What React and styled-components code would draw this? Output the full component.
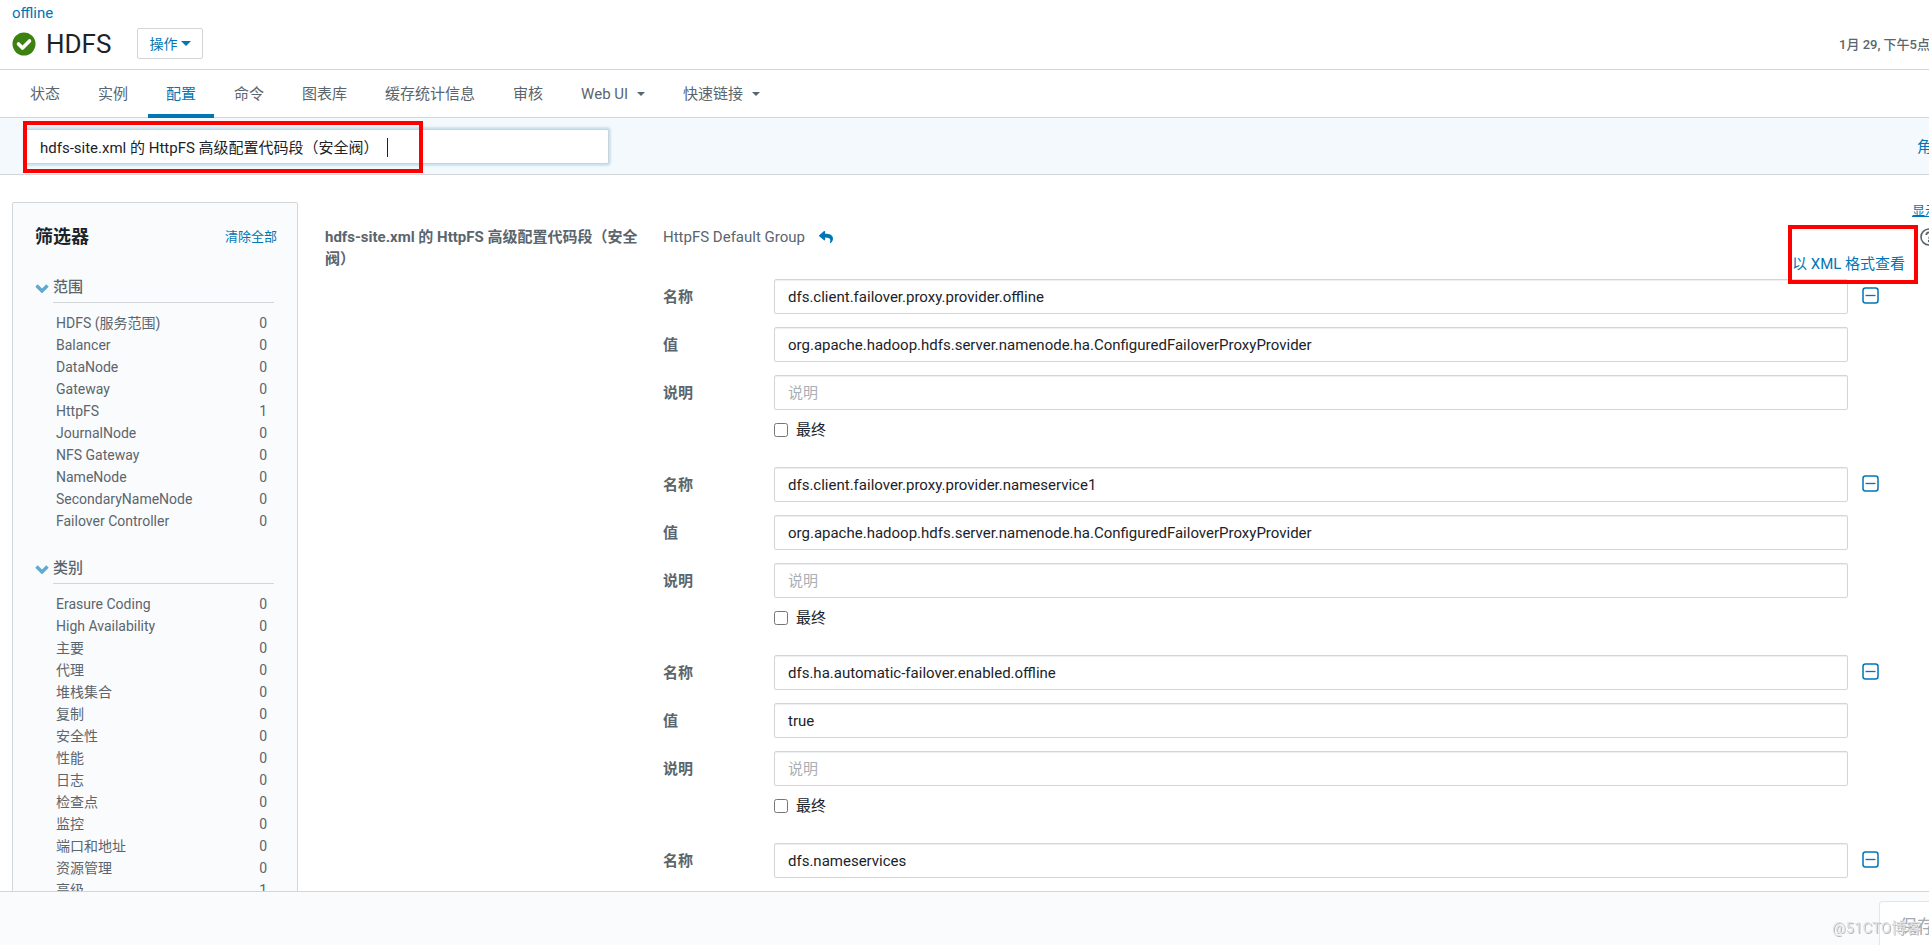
import React, { useState } from "react";
import styled, { createGlobalStyle } from "styled-components";
import { FaReply } from "react-icons/fa";

const GlobalStyle = createGlobalStyle`
  * {
    box-sizing: border-box;
  }

  body {
    margin: 0;
    overflow: hidden;
    background: #fff;
    color: #5a656d;
    font-family: Roboto, "Noto Sans CJK SC", sans-serif;
    font-size: 15px;
    line-height: 22px;
  }

  a {
    color: #0076b5;
    text-decoration: none;
  }

  input,
  button {
    font: inherit;
  }
`;

// the page runs a little past the right side of the window
const Page = styled.div`
  display: flex;
  flex-direction: column;
  height: 100vh;
  margin-right: -26px;
`;

const Header = styled.header`
  display: flex;
  align-items: flex-end;
  justify-content: space-between;
  padding: 2px 25px 10px 12px;
  border-bottom: 1px solid #d3d6d9;
`;

const Cluster = styled.a`
  display: block;
`;

const TitleRow = styled.div`
  display: flex;
  align-items: center;
  margin-top: 4px;

  h1 {
    margin: 0 26px 0 10px;
    color: #1b2329;
    font-size: 26px;
    font-weight: 400;
    line-height: 30px;
  }
`;

const ActionButton = styled.button`
  display: flex;
  align-items: center;
  gap: 4px;
  height: 31px;
  padding: 0 11px;
  border: 1px solid #d3d6d9;
  border-radius: 2px;
  background: #fff;
  color: #0076b5;
  font-size: 14px;
`;

const Caret = styled.span`
  border: ${props => props.$size || 4}px solid transparent;
  border-top-color: currentColor;
  border-bottom: 0;
`;

const Clock = styled.span`
  padding-bottom: 3px;
  font-size: 13px;
  font-weight: 500;
`;

const Tabs = styled.nav`
  display: flex;
  gap: 2px;
  padding: 0 12px;
  border-bottom: 1px solid #d3d6d9;
`;

const Tab = styled.a`
  display: flex;
  align-items: center;
  gap: 9px;
  height: 48px;
  margin-bottom: -1px;
  padding: 4px 18px 0;
  border-bottom: 4px solid ${props => (props.$active ? "#0076b5" : "transparent")};
  color: ${props => (props.$active ? "#0076b5" : "#5a656d")};
`;

const SearchBar = styled.div`
  display: flex;
  align-items: center;
  justify-content: space-between;
  padding: 11px 23px 10px 25px;
  border-bottom: 1px solid #d3d6d9;
  background: #f4f9fd;
`;

const SearchBox = styled.div`
  position: relative;
  width: 584px;
  max-width: 90%;

  input {
    display: block;
    width: 100%;
    height: 35px;
    padding: 0 14px;
    border: 1px solid #c9d3da;
    border-radius: 2px;
    outline: 0;
    background: #fff;
    box-shadow: 0 0 2px 2px #cbe3ef;
    color: #1b2329;
  }
`;

const TextCursor = styled.span`
  position: absolute;
  top: 9px;
  left: 362px;
  width: 1px;
  height: 19px;
  background: #1b2329;
`;

const Mark = styled.span`
  position: absolute;
  top: ${props => props.$top}px;
  left: ${props => props.$left}px;
  width: ${props => props.$width}px;
  height: ${props => props.$height}px;
  border: 4px solid #fe0000;
  pointer-events: none;
`;

const Content = styled.main`
  display: flex;
  flex: 1;
  align-items: flex-start;
  min-height: 0;
  padding: 27px 17px 0 12px;
  overflow: hidden;
`;

const Sidebar = styled.aside`
  flex: none;
  width: 286px;
  padding: 22px 23px 23px 22px;
  border: 1px solid #d3d6d9;
  border-radius: 2px;
  background: #fafbfd;
`;

const SidebarHeader = styled.div`
  display: flex;
  align-items: center;
  justify-content: space-between;
  padding-bottom: 25px;

  h2 {
    margin: 0;
    color: #1b2329;
    font-size: 18px;
    font-weight: 700;
    line-height: 24px;
  }

  a {
    margin-right: -3px;
    font-size: 13px;
  }
`;

const Filter = styled.section`
  margin-bottom: 23px;

  ul {
    margin: 9px 0 0;
    padding: 0 7px 0 21px;
    list-style: none;
  }

  li {
    display: flex;
    justify-content: space-between;
    font-size: 14px;
  }
`;

const FilterTitle = styled.h3`
  display: flex;
  align-items: center;
  gap: 4px;
  margin: 0;
  font-size: 15px;
  font-weight: 500;
  line-height: 26px;

  svg {
    margin-bottom: 2px;
  }

  span {
    flex: 1;
    padding-bottom: 2px;
    border-bottom: 1px solid #d3d6d9;
  }
`;

const Settings = styled.div`
  flex: 1;
  padding-left: 27px;
`;

const ShowAll = styled.a`
  display: block;
  margin: -2px 0 4px;
  font-size: 13px;
  text-align: right;
  text-decoration: underline;
`;

const Property = styled.div`
  display: grid;
  grid-template-columns: 325px 1fr;
  column-gap: 13px;
`;

const PropertyName = styled.div`
  font-weight: 700;
`;

const GroupRow = styled.div`
  display: flex;
  align-items: center;
  gap: 14px;

  a {
    display: flex;
    margin-right: auto;
  }
`;

const HelpButton = styled.button`
  display: flex;
  padding: 0;
  border: 0;
  background: none;
  color: #5a656d;
`;

const XmlRow = styled.div`
  position: relative;
  width: 130px;
  margin: 5px 20px 4px auto;
  padding-left: 4px;
`;

const Entry = styled.div`
  display: grid;
  grid-template-columns: 111px 1fr 90px;
  align-items: center;
  row-gap: 13px;
  margin-bottom: 30px;

  > label {
    font-weight: 700;
  }
`;

const Field = styled.input`
  grid-column: 2;
  width: 100%;
  height: 35px;
  padding: 0 13px;
  border: 1px solid #d3d6d9;
  border-radius: 2px;
  box-shadow: inset 0 1px 1px #eceeef;
  color: #1b2329;

  &::placeholder {
    color: #a9afb4;
  }
`;

const RemoveButton = styled.button`
  display: flex;
  width: 17px;
  margin-left: 14px;
  padding: 0 0 2px;
  border: 0;
  background: none;
  color: #0076b5;
`;

const FinalCheck = styled.div`
  display: flex;
  grid-column: 2;
  align-items: center;
  gap: 8px;
  height: 14px;
  color: #1b2329;

  input {
    width: 14px;
    height: 14px;
    margin: 0;
  }
`;

const Footer = styled.footer`
  display: flex;
  flex: none;
  align-items: flex-start;
  justify-content: flex-end;
  height: 54px;
  padding-top: 9px;
  overflow: hidden;
  border-top: 1px solid #d3d6d9;
  background: #fafbfd;
`;

const SaveButton = styled.button`
  flex: none;
  height: 52px;
  padding: 0 19px;
  border: 1px solid #e3e5e7;
  border-radius: 3px;
  background: #fff;
  color: #a3a9ae;
  font-size: 18px;
`;

const Watermark = styled.span`
  position: fixed;
  right: 8px;
  bottom: 6px;
  color: #e2e3e5;
  font-size: 15px;
  text-shadow: 1px 1px 0 #b9bbbd;
`;

const tabs = [
  { label: "状态" },
  { label: "实例" },
  { label: "配置", active: true },
  { label: "命令" },
  { label: "图表库" },
  { label: "缓存统计信息" },
  { label: "审核" },
  { label: "Web UI", menu: true },
  { label: "快速链接", menu: true }
];

const filters = [
  {
    title: "范围",
    items: [
      ["HDFS (服务范围)", 0],
      ["Balancer", 0],
      ["DataNode", 0],
      ["Gateway", 0],
      ["HttpFS", 1],
      ["JournalNode", 0],
      ["NFS Gateway", 0],
      ["NameNode", 0],
      ["SecondaryNameNode", 0],
      ["Failover Controller", 0]
    ]
  },
  {
    title: "类别",
    items: [
      ["Erasure Coding", 0],
      ["High Availability", 0],
      ["主要", 0],
      ["代理", 0],
      ["堆栈集合", 0],
      ["复制", 0],
      ["安全性", 0],
      ["性能", 0],
      ["日志", 0],
      ["检查点", 0],
      ["监控", 0],
      ["端口和地址", 0],
      ["资源管理", 0],
      ["高级", 1]
    ]
  }
];

const provider =
  "org.apache.hadoop.hdfs.server.namenode.ha.ConfiguredFailoverProxyProvider";

const entries = [
  { name: "dfs.client.failover.proxy.provider.offline", value: provider },
  { name: "dfs.client.failover.proxy.provider.nameservice1", value: provider },
  { name: "dfs.ha.automatic-failover.enabled.offline", value: "true" },
  { name: "dfs.nameservices" }
];

const CheckIcon = () => (
  <svg width="24" height="24" viewBox="0 0 24 24" aria-hidden="true">
    <circle cx="12" cy="12" r="11.5" fill="#3c8210" />
    <path
      d="M6.500 12l4 4L17.500 9"
      fill="none"
      stroke="#fff"
      strokeWidth="3.6"
      strokeLinecap="round"
      strokeLinejoin="round"
    />
  </svg>
);

const ChevronIcon = () => (
  <svg width="14" height="10" viewBox="0 0 14 10" aria-hidden="true">
    <path
      d="M1.5 2.5L7 8l5.5-5.5"
      fill="none"
      stroke="#5fa9d2"
      strokeWidth="3.4"
    />
  </svg>
);

const MinusIcon = () => (
  <svg width="17" height="17" viewBox="0 0 17 17" aria-hidden="true">
    <rect
      x="1"
      y="1"
      width="15"
      height="15"
      rx="2.5"
      fill="none"
      stroke="currentColor"
      strokeWidth="1.5"
    />
    <path d="M3.5 8.5h10" stroke="currentColor" strokeWidth="1.3" />
  </svg>
);

const HelpIcon = () => (
  <svg width="18" height="18" viewBox="0 0 18 18" fill="none" aria-hidden="true">
    <circle cx="9" cy="9" r="8" stroke="currentColor" strokeWidth="1.6" />
    <path
      d="M6.3 7c0-3.6 5.4-3.4 5.4-.4 0 1.9-2.7 1.8-2.7 4"
      stroke="currentColor"
      strokeWidth="1.8"
    />
    <circle cx="9" cy="13" r="1.2" fill="currentColor" />
  </svg>
);

function ConfigEntry({ id, entry }) {
  return (
    <Entry>
      <label htmlFor={`${id}-name`}>名称</label>
      <Field id={`${id}-name`} defaultValue={entry.name} />
      <RemoveButton type="button" aria-label="remove">
        <MinusIcon />
      </RemoveButton>
      {entry.value && (
        <>
          <label htmlFor={`${id}-value`}>值</label>
          <Field id={`${id}-value`} defaultValue={entry.value} />
          <span />
          <label htmlFor={`${id}-desc`}>说明</label>
          <Field id={`${id}-desc`} placeholder="说明" />
          <FinalCheck>
            <input type="checkbox" id={`${id}-final`} />
            <label htmlFor={`${id}-final`}>最终</label>
          </FinalCheck>
        </>
      )}
    </Entry>
  );
}

export default function App() {
  const [query, setQuery] = useState(
    "hdfs-site.xml 的 HttpFS 高级配置代码段（安全阀）"
  );

  return (
    <>
      <GlobalStyle />
      <Page>
        <Header>
          <div>
            <Cluster href="#cluster">offline</Cluster>
            <TitleRow>
              <CheckIcon />
              <h1>HDFS</h1>
              <ActionButton type="button">
                操作
                <Caret $size={5} />
              </ActionButton>
            </TitleRow>
          </div>
          <Clock>1月 29, 下午5点</Clock>
        </Header>
        <Tabs>
          {tabs.map(tab => (
            <Tab key={tab.label} href="#tab" $active={tab.active}>
              {tab.label}
              {tab.menu && <Caret />}
            </Tab>
          ))}
        </Tabs>
        <SearchBar>
          <SearchBox>
            <input
              type="text"
              aria-label="search"
              value={query}
              onChange={e => setQuery(e.target.value)}
            />
            <TextCursor />
            <Mark $top={-8} $left={-2} $width={400} $height={52} />
          </SearchBox>
          <a href="#roles">角</a>
        </SearchBar>
        <Content>
          <Sidebar>
            <SidebarHeader>
              <h2>筛选器</h2>
              <a href="#clear">清除全部</a>
            </SidebarHeader>
            {filters.map(filter => (
              <Filter key={filter.title}>
                <FilterTitle>
                  <ChevronIcon />
                  <span>{filter.title}</span>
                </FilterTitle>
                <ul>
                  {filter.items.map(([label, count]) => (
                    <li key={label}>
                      <span>{label}</span>
                      <span>{count}</span>
                    </li>
                  ))}
                </ul>
              </Filter>
            ))}
          </Sidebar>
          <Settings>
            <ShowAll href="#descriptions">显示</ShowAll>
            <Property>
              <PropertyName>
                hdfs-site.xml 的 HttpFS 高级配置代码段（安全阀）
              </PropertyName>
              <div>
                <GroupRow>
                  <span>HttpFS Default Group</span>
                  <a href="#reset" aria-label="reset">
                    <FaReply size={14} />
                  </a>
                  <HelpButton type="button" aria-label="help">
                    <HelpIcon />
                  </HelpButton>
                </GroupRow>
                <XmlRow>
                  <a href="#xml">以 XML 格式查看</a>
                  <Mark $top={-28} $left={0} $width={130} $height={59} />
                </XmlRow>
                {entries.map((entry, i) => (
                  <ConfigEntry key={entry.name} id={`entry-${i}`} entry={entry} />
                ))}
              </div>
            </Property>
          </Settings>
        </Content>
        <Footer>
          <SaveButton type="button">保存</SaveButton>
        </Footer>
      </Page>
      <Watermark>@51CTO博客</Watermark>
    </>
  );
}
